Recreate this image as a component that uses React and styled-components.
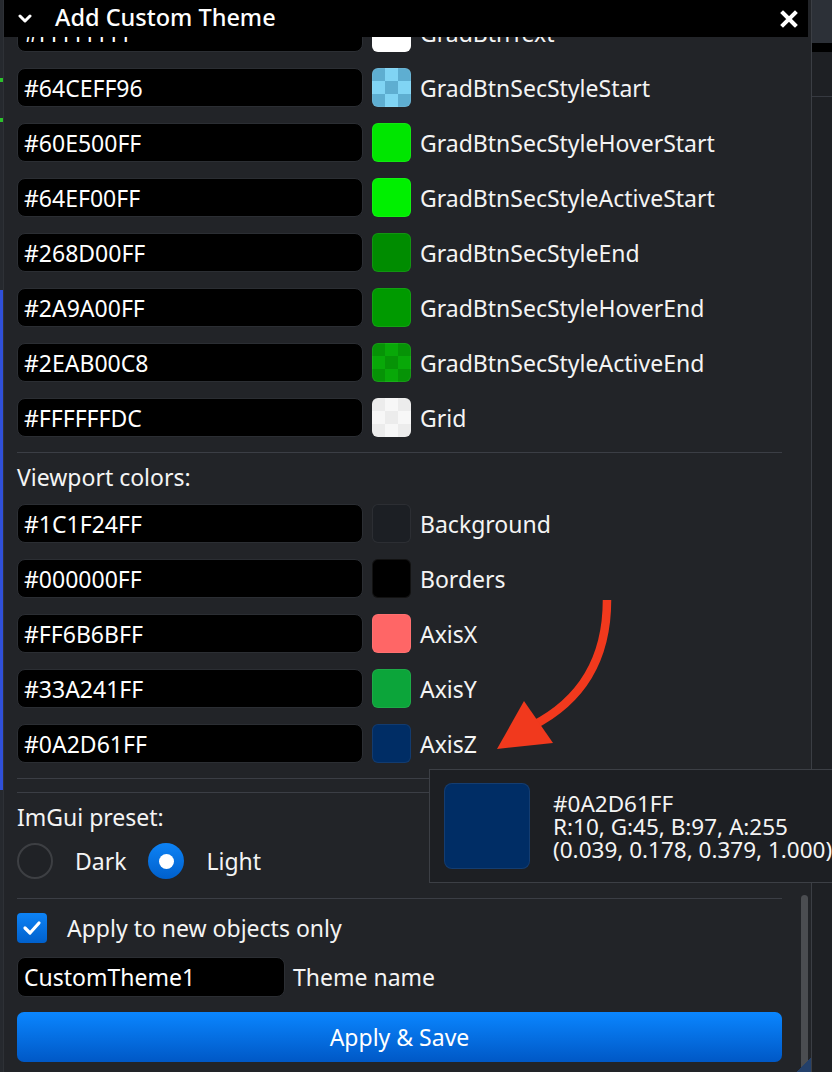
import React from 'react';
import styled, { createGlobalStyle } from 'styled-components';

const GlobalStyle = createGlobalStyle`
  html, body {
    margin: 0;
    padding: 0;
    background: #1e2024;
  }
  body {
    font-family: "Noto Sans", "Liberation Sans", sans-serif;
    color: #f4f4f4;
  }
  * {
    box-sizing: border-box;
  }
`;

// swatch: what the editor actually paints (one colour, or two checker tones for alpha)
const uiColors = [
  { hex: '#FFFFFFFF', name: 'GradBtnText', swatch: ['#ffffff'] },
  { hex: '#64CEFF96', name: 'GradBtnSecStyleStart', swatch: ['#80d4f4', '#5eaed1'] },
  { hex: '#60E500FF', name: 'GradBtnSecStyleHoverStart', swatch: ['#00e600'] },
  { hex: '#64EF00FF', name: 'GradBtnSecStyleActiveStart', swatch: ['#00f000'] },
  { hex: '#268D00FF', name: 'GradBtnSecStyleEnd', swatch: ['#008c00'] },
  { hex: '#2A9A00FF', name: 'GradBtnSecStyleHoverEnd', swatch: ['#009a00'] },
  { hex: '#2EAB00C8', name: 'GradBtnSecStyleActiveEnd', swatch: ['#08a808', '#069306'] },
  { hex: '#FFFFFFDC', name: 'Grid', swatch: ['#f7f7f7', '#ececec'] },
];

const viewportColors = [
  { hex: '#1C1F24FF', name: 'Background', swatch: ['#1c1f24'] },
  { hex: '#000000FF', name: 'Borders', swatch: ['#000000'] },
  { hex: '#FF6B6BFF', name: 'AxisX', swatch: ['#ff6666'] },
  { hex: '#33A241FF', name: 'AxisY', swatch: ['#0ca53a'] },
  { hex: '#0A2D61FF', name: 'AxisZ', swatch: ['#002d65'] },
];

const ColorRow = ({ hex, name, swatch }) => (
  <Row>
    <HexField>{hex}</HexField>
    <Swatch $light={swatch[0]} $dark={swatch[1]} />
    <RowLabel>{name}</RowLabel>
  </Row>
);

const Chevron = () => (
  <svg width="14" height="10" viewBox="0 0 14 10">
    <path d="M2 2 L7 7 L12 2" fill="none" stroke="#fff" strokeWidth="3" strokeLinecap="round" strokeLinejoin="round" />
  </svg>
);

const CloseIcon = () => (
  <svg width="18" height="18" viewBox="0 0 18 18">
    <path d="M3 3 L15 15 M15 3 L3 15" stroke="#fff" strokeWidth="4" strokeLinecap="square" />
  </svg>
);

const CheckMark = () => (
  <svg width="30" height="30" viewBox="0 0 30 30">
    <path d="M8 15 L13 20 L22 10" fill="none" stroke="#fff" strokeWidth="3.2" strokeLinecap="round" strokeLinejoin="round" />
  </svg>
);

const App = () => {
  const axisZ = { hex: '#0A2D61FF', rgb: 'R:10, G:45, B:97, A:255', f: '(0.039, 0.178, 0.379, 1.000)' };

  return (
    <>
      <GlobalStyle />
      <Page>
        <LeftStrip>
          <StripTick $top={78} />
          <StripTick $top={118} />
          <StripBlue />
        </LeftStrip>

        <Window>
          <TitleBar>
            <Chevron />
            <Title>Add Custom Theme</Title>
            <CloseButton><CloseIcon /></CloseButton>
          </TitleBar>

          <Body>
            <Scrolled>
              <Group>
                {uiColors.map((c) => <ColorRow key={c.name} {...c} />)}
              </Group>
              <Separator $top={15} />
              <SectionLabel>Viewport colors:</SectionLabel>
              <Group>
                {viewportColors.map((c) => <ColorRow key={c.name} {...c} />)}
              </Group>
              <Separator $top={15} />
              <Separator $top={13} />
              <SectionLabel>ImGui preset:</SectionLabel>
              <RadioRow>
                <Radio />
                <OptionText>Dark</OptionText>
                <Radio $checked />
                <OptionText>Light</OptionText>
              </RadioRow>
              <Separator $top={19} />
              <CheckRow>
                <CheckBox><CheckMark /></CheckBox>
                <OptionText>Apply to new objects only</OptionText>
              </CheckRow>
              <NameRow>
                <NameField>CustomTheme1</NameField>
                <RowLabel>Theme name</RowLabel>
              </NameRow>
              <SaveButton>Apply &amp; Save</SaveButton>
            </Scrolled>
            <ScrollThumb />
            <ResizeGrip />
          </Body>
        </Window>

        <SidePanel>
          <SideHeader />
          <SideBand />
          <SideBlock />
        </SidePanel>

        <Arrow width="832" height="1072" viewBox="0 0 832 1072">
          <path d="M607 600 Q 607 688 532 726" fill="none" stroke="#f1391d" strokeWidth="8.5" strokeLinecap="butt" />
          <polygon points="497,749 524,701 553,743" fill="#f1391d" />
        </Arrow>

        <Tooltip>
          <TipSwatch />
          <TipText>
            <div>{axisZ.hex}</div>
            <div>{axisZ.rgb}</div>
            <div>{axisZ.f}</div>
          </TipText>
        </Tooltip>
      </Page>
    </>
  );
};

// Styled Components
const Page = styled.div`
  position: relative;
  display: flex;
  width: 832px;
  height: 1072px;
  overflow: hidden;
  background: #1e2024;
`;

const LeftStrip = styled.div`
  position: relative;
  width: 3px;
  flex: none;
  background: #26292e;
`;

const StripTick = styled.div`
  position: absolute;
  left: 0;
  top: ${({ $top }) => $top}px;
  width: 3px;
  height: 4px;
  background: #2cc12c;
`;

const StripBlue = styled.div`
  position: absolute;
  left: 0;
  top: 290px;
  width: 3px;
  height: 500px;
  background: #3050d8;
`;

const Window = styled.div`
  width: 809px;
  flex: none;
  display: flex;
  flex-direction: column;
  background: #222428;
  border-left: 1px solid #2e3136;
  border-right: 1px solid #3b3e44;
`;

const TitleBar = styled.div`
  height: 37px;
  flex: none;
  display: flex;
  align-items: center;
  padding: 0 10px 0 14px;
  margin-right: 3px;
  background: #000;
`;

const Title = styled.div`
  margin-left: 23px;
  margin-top: -3px;
  font-size: 23.5px;
  font-weight: 500;
  color: #fff;
  flex: 1;
`;

const CloseButton = styled.div`
  display: flex;
  align-items: center;
`;

const Body = styled.div`
  position: relative;
  flex: 1;
  overflow: hidden;
  padding: 0 29px 0 13px;
`;

const Scrolled = styled.div`
  margin-top: -24px;
  display: flex;
  flex-direction: column;
`;

const Group = styled.div`
  display: flex;
  flex-direction: column;
  gap: 16px;
`;

const Row = styled.div`
  display: flex;
  align-items: center;
  gap: 9px;
  height: 39px;
`;

const Field = styled.div`
  height: 39px;
  display: flex;
  align-items: center;
  padding-left: 6px;
  background: #000;
  border: 1px solid #2b2e33;
  border-radius: 8px;
  font-size: 23px;
  color: #fff;
  flex: none;
`;

const HexField = styled(Field)`
  width: 346px;
`;

const NameField = styled(Field)`
  width: 268px;
  height: 40px;
`;

const Swatch = styled.div`
  width: 39px;
  height: 39px;
  flex: none;
  border-radius: 6px;
  box-shadow: inset 0 0 0 1px rgba(255, 255, 255, 0.07);
  background: ${({ $light, $dark }) =>
    $dark
      ? `repeating-conic-gradient(${$light} 0 25%, ${$dark} 0 50%) 0 0 / 26px 26px`
      : $light};
`;

const RowLabel = styled.span`
  font-size: 23px;
  color: #f4f4f4;
  white-space: nowrap;
`;

const Separator = styled.div`
  height: 1px;
  margin-top: ${({ $top }) => $top}px;
  background: #3b3e45;
`;

const SectionLabel = styled.div`
  height: 30px;
  margin: 9px 0 12px;
  display: flex;
  align-items: center;
  font-size: 23px;
`;

const RadioRow = styled.div`
  display: flex;
  align-items: center;
  height: 36px;
  margin-top: -1px;
`;

const Radio = styled.div`
  width: 36px;
  height: 36px;
  flex: none;
  border-radius: 50%;
  display: flex;
  align-items: center;
  justify-content: center;
  margin-right: 22px;
  border: ${({ $checked }) => ($checked ? 'none' : '2px solid #3d3f43')};
  background: ${({ $checked }) => ($checked ? 'linear-gradient(#0d83f6, #0060cc)' : '#202226')};

  &::after {
    content: '';
    display: ${({ $checked }) => ($checked ? 'block' : 'none')};
    width: 15px;
    height: 15px;
    border-radius: 50%;
    background: #fff;
  }
`;

const OptionText = styled.span`
  font-size: 23px;
  margin-right: 22px;
  white-space: nowrap;
`;

const CheckRow = styled.div`
  display: flex;
  align-items: center;
  height: 30px;
  margin-top: 14px;
`;

const CheckBox = styled.div`
  width: 30px;
  height: 30px;
  flex: none;
  border-radius: 4px;
  margin-right: 20px;
  background: linear-gradient(#0d83f6, #0060cc);
  display: flex;
  align-items: center;
  justify-content: center;
`;

const NameRow = styled.div`
  display: flex;
  align-items: center;
  gap: 8px;
  margin-top: 14px;
`;

const SaveButton = styled.div`
  margin-top: 15px;
  height: 50px;
  border-radius: 7px;
  display: flex;
  align-items: center;
  justify-content: center;
  font-size: 23px;
  color: #fff;
  background: linear-gradient(#0a86ff, #0058c6);
`;

const ScrollThumb = styled.div`
  position: absolute;
  right: 3px;
  top: 858px;
  bottom: -10px;
  width: 7px;
  border-radius: 4px;
  background: #4b4d51;
`;

const ResizeGrip = styled.div`
  position: absolute;
  right: 0;
  bottom: 0;
  width: 14px;
  height: 14px;
  background: linear-gradient(135deg, transparent 50%, #24406a 50%);
`;

const SidePanel = styled.div`
  flex: 1;
  display: flex;
  flex-direction: column;
  background: #1e2024;
`;

const SideHeader = styled.div`
  height: 43px;
  background: #2c3037;
`;

const SideBand = styled.div`
  height: 9px;
  background: #000;
`;

const SideBlock = styled.div`
  height: 45px;
  border-bottom: 1px solid #363940;
`;

const Arrow = styled.svg`
  position: absolute;
  left: 0;
  top: 0;
  pointer-events: none;
`;

const Tooltip = styled.div`
  position: absolute;
  left: 429px;
  top: 769px;
  width: 420px;
  height: 114px;
  display: flex;
  align-items: center;
  padding-left: 14px;
  background: #1d1f23;
  border: 1px solid #3c3f45;
`;

const TipSwatch = styled.div`
  width: 86px;
  height: 86px;
  flex: none;
  border-radius: 8px;
  background: #002d65;
  box-shadow: inset 0 0 0 1px rgba(255, 255, 255, 0.08);
`;

const TipText = styled.div`
  margin-left: 23px;
  font-size: 22.5px;
  line-height: 23px;
  color: #f4f4f4;
  white-space: nowrap;
`;

export default App;
